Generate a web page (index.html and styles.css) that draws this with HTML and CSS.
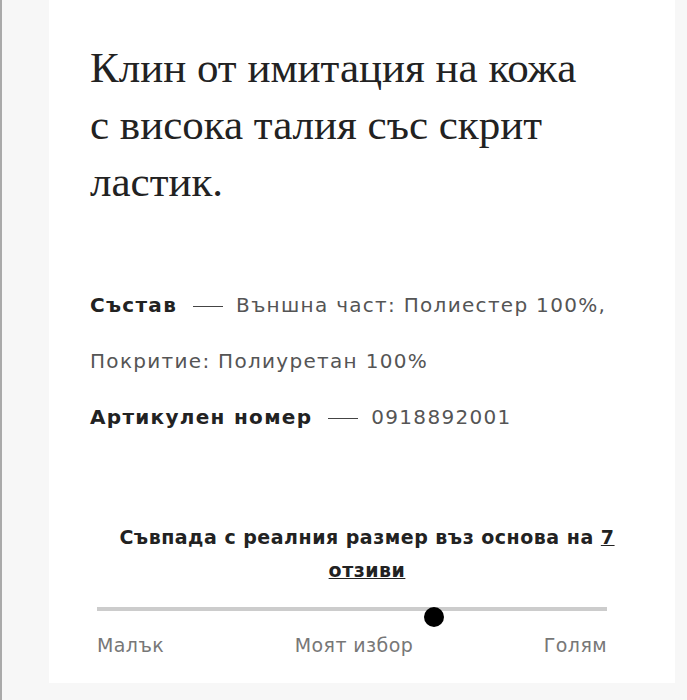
FILE: index.html
```html
<!DOCTYPE html>
<html lang="bg">
<head>
    <meta charset="UTF-8">
    <meta name="viewport" content="width=device-width, initial-scale=1.0">
    <title>Клин от имитация на кожа</title>
    <link rel="stylesheet" href="styles.css">
</head>
<body>
    <div class="page">
        <div class="card">
            <h1 class="title">Клин от имитация на кожа с висока талия със скрит ластик.</h1>
            <div class="details">
                <p class="detail">
                    <b>Състав</b><span class="dash"></span>Външна част: Полиестер 100%, Покритие: Полиуретан 100%
                </p>
                <p class="detail">
                    <b>Артикулен номер</b><span class="dash"></span>0918892001
                </p>
            </div>
            <div class="fit">
                <h2 class="fit-title">Съвпада с реалния размер въз основа на <a href="#">7 отзиви</a></h2>
                <div class="slider">
                    <div class="track"></div>
                    <div class="knob" style="left: 66%"></div>
                </div>
                <div class="fit-labels">
                    <span>Малък</span>
                    <span>Моят избор</span>
                    <span>Голям</span>
                </div>
            </div>
        </div>
    </div>
</body>
</html>
```
FILE: styles.css
```css
body {
    margin: 0;
    padding: 0;
    background: #f7f7f7;
    border-left: 2px solid #aaa;
    height: 700px;
    box-sizing: border-box;
    font-family: "DejaVu Sans", sans-serif;
    color: #222;
}
.page { display: flex; }
.card {
    margin-left: 47px;
    width: 626px;
    height: 683px;
    background: #fff;
    padding: 0 41px;
    box-sizing: border-box;
}
.title {
    font-family: "Liberation Serif", serif;
    font-weight: normal;
    font-size: 43px;
    line-height: 57px;
    color: #222;
    margin: 0;
    padding-top: 39px;
    width: 495px;
}
.details {
    margin-top: 67px;
    font-size: 20px;
    letter-spacing: 1.3px;
    line-height: 56px;
    color: #555;
}
.detail { margin: 0; }
.detail b { color: #222; }
.dash {
    display: inline-block;
    width: 30px;
    border-top: 1px solid #444;
    vertical-align: middle;
    margin: 0 13px 0 16px;
}
.fit { margin-top: 76px; padding: 0 7px; }
.fit-title {
    font-size: 19px;
    letter-spacing: 0.5px;
    line-height: 33px;
    font-weight: bold;
    text-align: center;
    margin: 0;
    padding-left: 10px;
}
.fit-title a { color: #222; }
.slider { position: relative; height: 20px; margin-top: 20px; width: 510px; }
.track { height: 4px; background: #ccc; margin-top: 8px; }
.knob {
    position: absolute;
    top: 0;
    width: 20px;
    height: 20px;
    margin-left: -10px;
    border-radius: 50%;
    background: #000;
}
.fit-labels {
    display: flex;
    justify-content: space-between;
    width: 510px;
    margin-top: 7px;
    font-size: 19px;
    letter-spacing: 0.4px;
    color: #777;
}
```
